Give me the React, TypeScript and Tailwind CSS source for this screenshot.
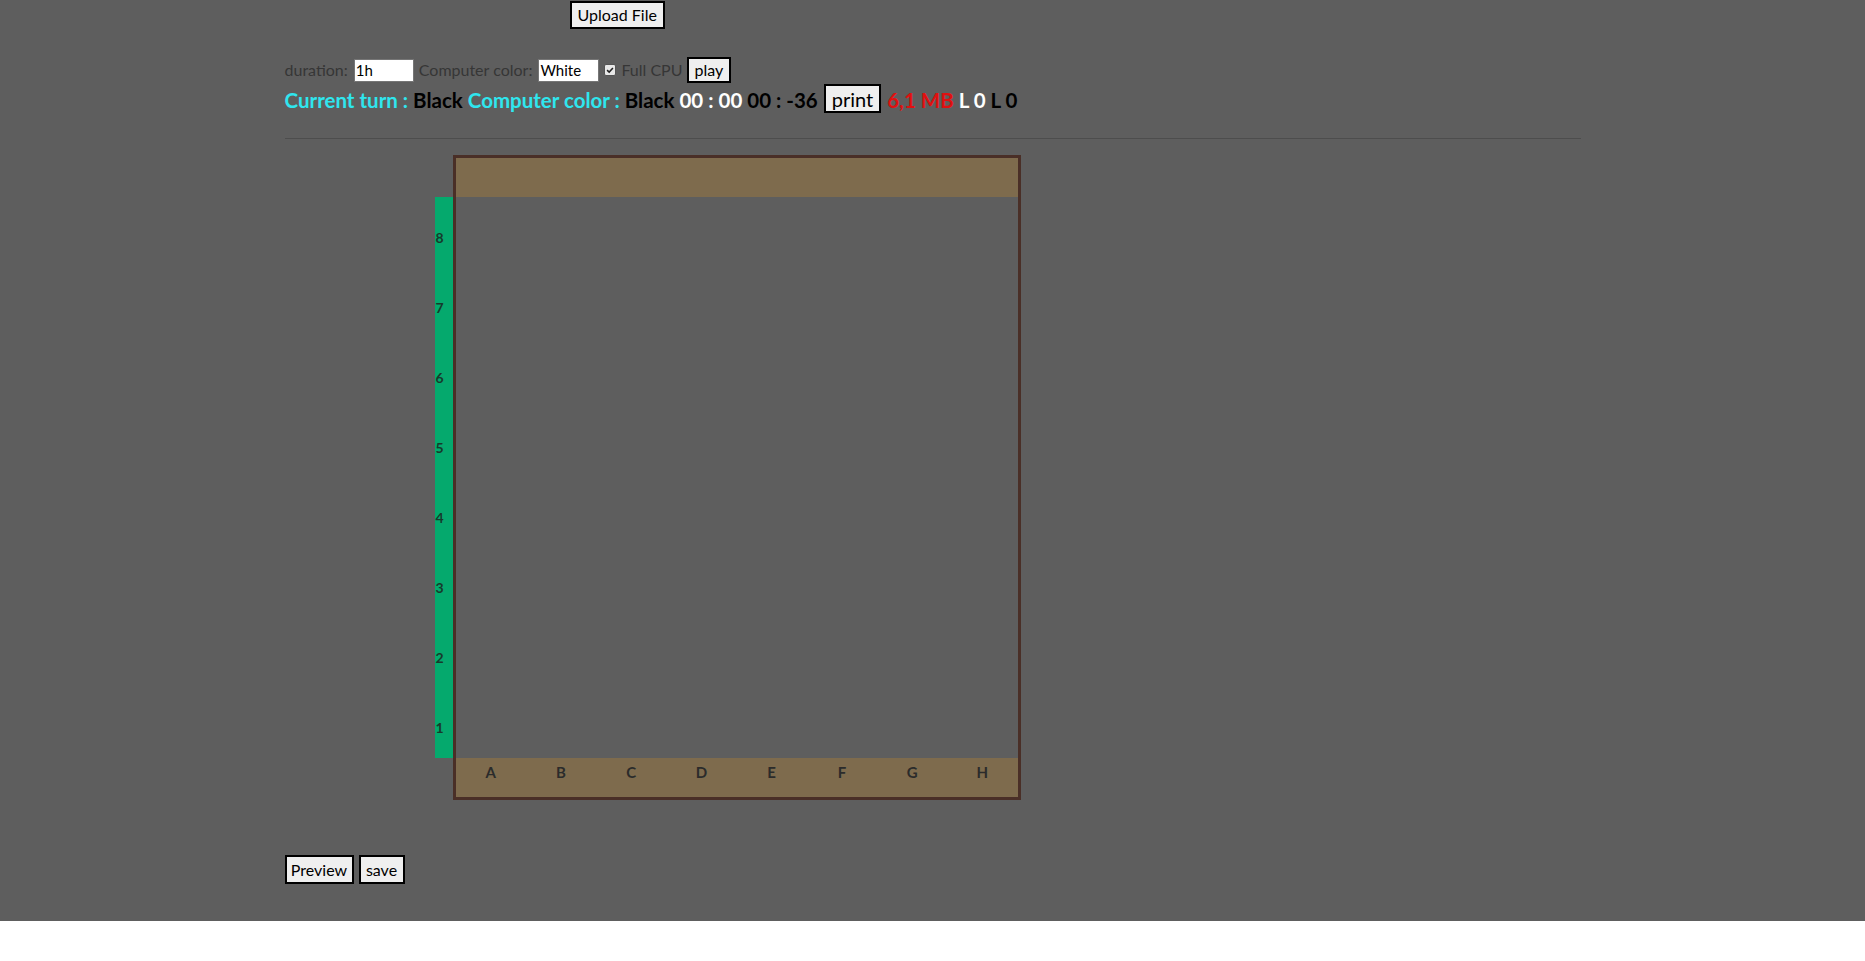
import React from "react";

const btn =
  "border-2 border-black bg-[#efefef] text-black leading-none flex items-center justify-center";

export default function App() {
  const ranks = ["8", "7", "6", "5", "4", "3", "2", "1"];
  const files = ["A", "B", "C", "D", "E", "F", "G", "H"];
  return (
    <div
      className="bg-[#5e5e5e] pb-[37px] pt-[1px]"
      style={{ fontFamily: "Lato, 'Liberation Sans', sans-serif" }}
    >
      <div className="mx-auto w-[1296px]">
        <div className="flex">
          <button className={`${btn} ml-[285px] h-[28px] px-[6px] text-[16px]`}>
            Upload File
          </button>
        </div>

        <div className="mt-[28px] flex h-[26px] items-center text-[16px] text-[#363636]">
          <span>duration:</span>
          <input
            defaultValue="1h"
            className="ml-[6px] h-[23px] w-[60px] border border-[#767676] bg-white pl-[1px] text-[15px] text-black outline-none"
          />
          <span className="ml-[5px]">Computer color:</span>
          <input
            defaultValue="White"
            className="ml-[6px] h-[23px] w-[61px] border border-[#767676] bg-white pl-[1px] text-[15px] text-black outline-none"
          />
          <span className="ml-[5px] flex h-[12px] w-[12px] items-center justify-center rounded-[2px] border border-[#555] bg-[#e8e8e8]">
            <svg viewBox="0 0 12 12" className="h-[10px] w-[10px]">
              <path d="M2.5 6.2 L5 8.5 L9.5 3.5" fill="none" stroke="#222" strokeWidth="1.8" />
            </svg>
          </span>
          <span className="ml-[5px]">Full CPU</span>
          <button className={`${btn} ml-[4px] h-[26px] px-[6px] text-[16px]`}>play</button>
        </div>

        <div className="mt-[1px] flex h-[29px] items-center gap-[5px] pt-[4px] text-[20.5px] font-bold whitespace-pre">
          <span className="text-[#2fe6ee]">Current turn :</span>
          <span className="text-black">Black</span>
          <span className="text-[#2fe6ee]">Computer color :</span>
          <span className="text-black">Black</span>
          <span className="text-white">00 : 00</span>
          <span className="text-black">00 : -36</span>
          <button className={`${btn} -mt-[4px] ml-[1px] h-[29px] px-[6px] text-[20px] font-normal`}>print</button>
          <span className="ml-[1px] text-[#e01010]">6,1 MB</span>
          <span className="text-white">L 0</span>
          <span className="text-black">L 0</span>
        </div>

        <div className="mt-[25px] h-0 border-t border-[#4d4d4d]" />

        <div className="mt-[16px] ml-[150px] flex items-start">
          <div className="mt-[42px] flex h-[561px] w-[18px] flex-col bg-[#05a96d]">
            {ranks.map((r) => (
              <div
                key={r}
                className="flex h-[70.125px] items-center pl-[1px] pt-[10px] text-[14px] font-bold text-[#163a2b]"
              >
                {r}
              </div>
            ))}
          </div>
          <div className="w-[568px] border-[3px] border-[#4a2f27]">
            <div className="h-[39px] bg-[#7e6b4d]" />
            <div className="h-[561px] bg-[#5e5e5e]" />
            <div className="flex h-[39px] bg-[#7e6b4d]">
              {files.map((f) => (
                <div
                  key={f}
                  className="flex flex-1 items-center justify-center pb-[10px] text-[15px] font-bold text-[#2b2b2b]"
                >
                  {f}
                </div>
              ))}
            </div>
          </div>
        </div>

        <div className="mt-[55px] flex gap-[5px]">
          <button className={`${btn} h-[29px] w-[69px] text-[16px]`}>Preview</button>
          <button className={`${btn} h-[29px] w-[46px] text-[16px]`}>save</button>
        </div>
      </div>
    </div>
  );
}
